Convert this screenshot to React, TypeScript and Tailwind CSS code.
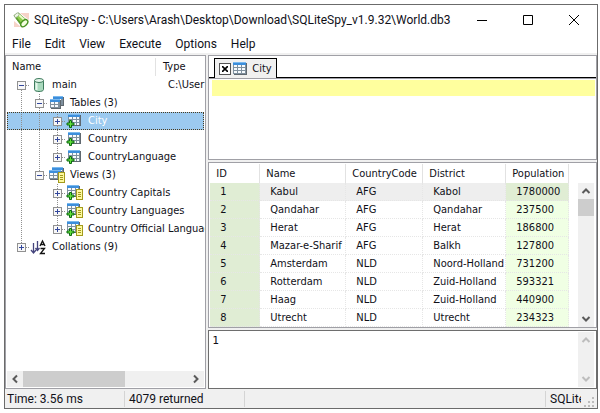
import { useState } from 'react'
import type { ReactNode } from 'react'

type IconName = 'database' | 'tables' | 'views' | 'table' | 'view' | 'collation'

interface TreeNode {
  label: string
  icon: IconName
  type?: string
  open?: boolean
  above?: boolean
  below?: boolean
  guides: boolean[]
}

const nodes: TreeNode[] = [
  { label: 'main', icon: 'database', type: 'C:\\User', open: true, below: true, guides: [] },
  { label: 'Tables (3)', icon: 'tables', open: true, above: true, below: true, guides: [true] },
  { label: 'City', icon: 'table', above: true, below: true, guides: [true, true] },
  { label: 'Country', icon: 'table', above: true, below: true, guides: [true, true] },
  { label: 'CountryLanguage', icon: 'table', above: true, guides: [true, true] },
  { label: 'Views (3)', icon: 'views', open: true, above: true, guides: [true] },
  { label: 'Country Capitals', icon: 'view', above: true, below: true, guides: [true, false] },
  { label: 'Country Languages', icon: 'view', above: true, below: true, guides: [true, false] },
  { label: 'Country Official Languages', icon: 'view', above: true, guides: [true, false] },
  { label: 'Collations (9)', icon: 'collation', above: true, guides: [] },
]

const columns = [
  { title: 'ID', width: 'w-[50px]' },
  { title: 'Name', width: 'w-[86px]' },
  { title: 'CountryCode', width: 'w-[77px]' },
  { title: 'District', width: 'w-[83px]' },
  { title: 'Population', width: 'w-[63px]' },
]

const cities = [
  ['1', 'Kabul', 'AFG', 'Kabol', '1780000'],
  ['2', 'Qandahar', 'AFG', 'Qandahar', '237500'],
  ['3', 'Herat', 'AFG', 'Herat', '186800'],
  ['4', 'Mazar-e-Sharif', 'AFG', 'Balkh', '127800'],
  ['5', 'Amsterdam', 'NLD', 'Noord-Holland', '731200'],
  ['6', 'Rotterdam', 'NLD', 'Zuid-Holland', '593321'],
  ['7', 'Haag', 'NLD', 'Zuid-Holland', '440900'],
  ['8', 'Utrecht', 'NLD', 'Utrecht', '234323'],
]

const menus = ['File', 'Edit', 'View', 'Execute', 'Options', 'Help']

function Logo() {
  return (
    <svg viewBox="0 0 16 16" className="h-4 w-4 shrink-0">
      <path d="M7 1h9v7zM1 9v6h7z" fill="#f6d3c8" />
      <path d="M1 3.500 5.500 1 14 8.500 8.500 14z" fill="#8fcf4d" stroke="#5c8f3a" strokeWidth="0.7" />
      <path d="m5.500 2.500 6 5.500" stroke="#e9fbc8" strokeWidth="2" />
      <path d="m3 5.500 5.500 7" stroke="#5c9d2e" strokeWidth="1.500" />
      <ellipse cx="3.700" cy="3.200" rx="1.700" ry="2.800" transform="rotate(50 3.700 3.200)" fill="#eef6e4" stroke="#8aa57a" strokeWidth="0.7" />
      <ellipse cx="11.300" cy="11.200" rx="2.600" ry="4.200" transform="rotate(45 11.300 11.200)" fill="#f4fde0" stroke="#4a9422" strokeWidth="1.400" />
    </svg>
  )
}

function TableGrid({ x, y, w = 12, h = 11 }: { x: number; y: number; w?: number; h?: number }) {
  return (
    <g>
      <rect x={x + 1} y={y + 1} width={w} height={h} fill="#5f686f" />
      <rect x={x} y={y} width={w} height={h} fill="#7f909e" />
      <rect x={x} y={y} width={w} height="3" fill="#3c8edb" />
      <rect x={x} y={y} width={w} height="1" fill="#79b8ee" />
      {[3, 6, 9].filter((r) => r + 2 <= h).map((r) =>
        [1, 5, 9].map((c) => (
          <rect key={`${r}-${c}`} x={x + c} y={y + r} width={Math.min(3, w - c - 1)} height="2" fill="#f6fafd" />
        ))
      )}
    </g>
  )
}

function Plus() {
  return (
    <path
      d="M3.500 8.500h2v2.500H8v2H5.500v2.500h-2V13H1v-2h2.500z"
      fill="#63e03c"
      stroke="#0c6b12"
      strokeWidth="1"
    />
  )
}

function Sheet({ x, y }: { x: number; y: number }) {
  return (
    <g>
      <rect x={x + 0.5} y={y + 0.5} width="6" height="10" fill="#fdf9a0" stroke="#a39a1c" />
      <path d={`M${x + 2} ${y + 3.5}h3M${x + 2} ${y + 5.5}h3M${x + 2} ${y + 7.5}h3`} stroke="#a39a1c" />
    </g>
  )
}

const drawings: Record<IconName, ReactNode> = {
  database: (
    <>
      <path d="M4.500 4.500v9c0 1.300 2 2 4.500 2s4.500-.7 4.500-2v-9" fill="#a9d9bd" stroke="#3d7a5c" />
      <path d="M6.500 6v8" stroke="#e6f7ec" strokeWidth="2" />
      <ellipse cx="9" cy="4.500" rx="4.500" ry="2" fill="#e4f5ea" stroke="#3d7a5c" />
    </>
  ),
  tables: (
    <>
      <TableGrid x={5} y={2} w={10} h={9} />
      <TableGrid x={2} y={5} w={10} h={9} />
    </>
  ),
  views: (
    <>
      <TableGrid x={4} y={1} w={11} h={9} />
      <TableGrid x={1} y={4} w={12} h={9} />
      <Sheet x={10} y={6} />
    </>
  ),
  table: (
    <>
      <TableGrid x={2} y={2} />
      <Plus />
    </>
  ),
  view: (
    <>
      <TableGrid x={1} y={1} />
      <Plus />
      <Sheet x={10} y={5} />
    </>
  ),
  collation: (
    <>
      <path d="M3.500 5v10M1 12l2.500 3L6 12M7.500 3v9M5.500 10l2 2.500 2-2.500" stroke="#44447c" strokeWidth="1.300" fill="none" />
      <path d="m10 8 2.500-5L15 8M11 6.500h3M10.500 10.500h4l-4 5H15" stroke="#111" strokeWidth="1.300" fill="none" />
    </>
  ),
}

function NodeIcon({ name }: { name: IconName }) {
  return (
    <svg viewBox="0 0 18 18" className="h-[18px] w-[18px] shrink-0">
      {drawings[name]}
    </svg>
  )
}

function Branch({ open, above, below }: { open?: boolean; above?: boolean; below?: boolean }) {
  return (
    <svg viewBox="0 0 18 18" className="h-[18px] w-[18px] shrink-0" fill="none">
      {above && <path d="M9.500 0v5" stroke="#909090" strokeDasharray="1 1" />}
      {below && <path d="M9.500 14v4" stroke="#909090" strokeDasharray="1 1" />}
      <path d="M14 9.500h4" stroke="#909090" strokeDasharray="1 1" />
      <rect x="5.500" y="5.500" width="8" height="8" fill="#f8f8f8" stroke="#919191" />
      <path d="M7 9.500h5" stroke="#33479c" />
      {!open && <path d="M9.500 7v5" stroke="#33479c" />}
    </svg>
  )
}

function Guide({ visible }: { visible: boolean }) {
  return (
    <svg viewBox="0 0 18 18" className="h-[18px] w-[18px] shrink-0">
      {visible && <path d="M9.500 0v18" stroke="#909090" strokeDasharray="1 1" />}
    </svg>
  )
}

function Arrow({ d, muted }: { d: string; muted?: boolean }) {
  return (
    <svg viewBox="0 0 16 16" className="h-4 w-4" fill="none">
      <path d={d} stroke={muted ? '#bdbdbd' : '#5a5a5a'} strokeWidth="2" />
    </svg>
  )
}

const arrows = {
  up: 'm4.500 10 3.500-3.500L11.500 10',
  down: 'm4.500 6 3.500 3.500L11.500 6',
  left: 'M10 4.500 6.500 8l3.500 3.500',
  right: 'm6 4.500 3.500 3.500L6 11.500',
}

function TitleBar() {
  return (
    <header className="flex h-[30px] shrink-0 items-center pl-2 font-['Roboto',sans-serif] text-[12px]">
      <Logo />
      <h1 className="min-w-0 flex-1 pl-[5px] whitespace-nowrap">
        SQLiteSpy - C:\Users\Arash\Desktop\Download\SQLiteSpy_v1.9.32\World.db3
      </h1>
      <div className="flex">
        <button aria-label="Minimize" className="flex h-7 w-[46px] items-center justify-center">
          <svg viewBox="0 0 10 10" className="h-[10px] w-[10px]"><path d="M0 5.500h10" stroke="#000" /></svg>
        </button>
        <button aria-label="Maximize" className="flex h-7 w-[46px] items-center justify-center">
          <svg viewBox="0 0 10 10" className="h-[10px] w-[10px]"><path d="M.5.5h9v9h-9z" stroke="#000" fill="none" /></svg>
        </button>
        <button aria-label="Close" className="flex h-7 w-[46px] items-center justify-center">
          <svg viewBox="0 0 10 10" className="h-[10px] w-[10px]"><path d="m0 0 10 10M10 0 0 10" stroke="#000" /></svg>
        </button>
      </div>
    </header>
  )
}

function ObjectTree() {
  const [selected, setSelected] = useState('City')

  return (
    <aside className="flex w-[34%] shrink-0 flex-col overflow-hidden border border-[#a0a0a6] bg-white p-px leading-[18px]">
      <div className="flex h-[19px] items-center">
        <span className="w-[149px] border-r border-[#e2e2e2] pl-[5px]">Name</span>
        <span className="pl-[7px]">Type</span>
      </div>
      <ul>
        {nodes.map((node) => (
          <li key={node.label}>
            <button
              onClick={() => setSelected(node.label)}
              className={
                node.label === selected
                  ? 'flex h-[18px] w-full items-center bg-[#9ccaf0] pl-[5px] text-white outline-1 -outline-offset-1 outline-dotted outline-[#4a3c20]'
                  : 'flex h-[18px] w-full items-center pl-[5px]'
              }
            >
              {node.guides.map((visible, i) => <Guide key={i} visible={visible} />)}
              <Branch open={node.open} above={node.above} below={node.below} />
              <NodeIcon name={node.icon} />
              <span className="grow pl-1 text-left whitespace-nowrap">{node.label}</span>
              {node.type && <span className="shrink-0 whitespace-nowrap">{node.type}</span>}
            </button>
          </li>
        ))}
      </ul>
      <div className="mt-auto flex h-4 bg-[#f0f0f0]">
        <button aria-label="Scroll left"><Arrow d={arrows.left} /></button>
        <div className="flex-1"><div className="h-full w-[62%] bg-[#cdcdcd]" /></div>
        <button aria-label="Scroll right"><Arrow d={arrows.right} /></button>
      </div>
    </aside>
  )
}

function Editor() {
  return (
    <section className="flex min-h-[60px] flex-1 flex-col border border-[#a0a0a6] bg-white pt-px">
      <div className="flex shrink-0 pt-px">
        <div className="w-[5px] border-b border-black" />
        <div className="flex h-[20px] w-[63px] items-center border border-b-0 border-black bg-[#f0f0f0] pl-1">
          <button aria-label="Close tab" className="flex h-[12px] w-[12px] shrink-0 items-center justify-center border border-[#555] bg-white">
            <svg viewBox="0 0 6 6" className="h-[6px] w-[6px]"><path d="m0 0 6 6M6 0 0 6" stroke="#000" strokeWidth="1.600" /></svg>
          </button>
          <svg viewBox="0 0 14 14" className="ml-[2px] h-[14px] w-[14px] shrink-0"><TableGrid x={0} y={0} w={13} h={12} /></svg>
          <span className="pl-[5px]">City</span>
        </div>
        <div className="flex-1 border-b border-black" />
      </div>
      <div className="flex min-h-0 flex-1 border-t border-[#a0a0a6] pt-px pr-px pl-[3px]">
        <textarea
          aria-label="SQL"
          className="flex-1 resize-none bg-[linear-gradient(#ffff9e_16px,transparent_16px)] leading-[16px] outline-none"
        />
      </div>
    </section>
  )
}

function CityGrid() {
  return (
    <section className="flex shrink-0 border border-[#a0a0a6] bg-white pt-px pl-px">
      <table className="w-[359px] table-fixed border-separate border-spacing-0">
        <thead>
          <tr className="h-[19px]">
            {columns.map((column) => (
              <th key={column.title} className={`${column.width} border-r border-[#e2e2e2] p-0 pl-[6px] text-left font-normal`}>
                {column.title}
              </th>
            ))}
          </tr>
        </thead>
        <tbody>
          {cities.map((row, r) => (
            <tr key={row[0]} className={r === 0 ? 'h-[18px] bg-[#eeeeee]' : 'h-[18px]'}>
              {row.map((value, c) => (
                <td
                  key={c}
                  className={`border-r border-b border-dotted border-[#e6e6e6] p-0 pl-[10px] whitespace-nowrap ${
                    c === 0 || (c === 4 && r === 0) ? 'bg-[#e0edd4]' : c === 4 ? 'bg-[#f0ffe4]' : ''
                  }`}
                >
                  {value}
                </td>
              ))}
            </tr>
          ))}
        </tbody>
      </table>
      <div className="mt-[19px] mr-[2px] ml-auto flex w-4 flex-col bg-[#f0f0f0]">
        <button aria-label="Scroll up"><Arrow d={arrows.up} /></button>
        <div className="h-[17px] bg-[#cdcdcd]" />
        <button aria-label="Scroll down" className="mt-auto"><Arrow d={arrows.down} /></button>
      </div>
    </section>
  )
}

function Output() {
  return (
    <section className="flex h-[59px] shrink-0 border border-[#6e6e6e] bg-white py-px pr-[2px]">
      <textarea
        readOnly
        aria-label="Result"
        defaultValue="1"
        className="flex-1 resize-none py-px pl-[3px] font-['DejaVu_Sans_Mono',monospace] text-[11px] outline-none"
      />
      <div className="flex w-4 flex-col justify-between bg-[#f0f0f0]">
        <button aria-label="Scroll result up"><Arrow d={arrows.up} muted /></button>
        <button aria-label="Scroll result down"><Arrow d={arrows.down} muted /></button>
      </div>
    </section>
  )
}

function StatusBar() {
  return (
    <footer className="flex h-[19px] shrink-0 items-center font-['Roboto',sans-serif] text-[12px]">
      <span className="w-[120px] border-r border-[#d4d4d4] pl-[2px]">Time: 3.56 ms</span>
      <span className="w-[120px] border-r border-[#d4d4d4] pl-1">4079 returned</span>
      <span className="ml-auto w-[36px] overflow-hidden border-l border-[#d4d4d4] pl-1 whitespace-nowrap">SQLite</span>
      <svg viewBox="0 0 16 16" className="h-4 w-4 self-end" fill="#bcbcbc">
        <path d="M11 5h2v2h-2zM11 9h2v2h-2zM11 13h2v2h-2zM7 9h2v2H7zM7 13h2v2H7zM3 13h2v2H3z" />
      </svg>
    </footer>
  )
}

export default function App() {
  return (
    <div className="h-screen bg-white pt-1 pr-[2px] pb-1 pl-1 font-['DejaVu_Sans_Condensed','Open_Sans',sans-serif] text-[11px] leading-4 text-[#101018]">
      <div className="flex h-full flex-col border border-[#6b6b6b] bg-[#f0f0f0]">
        <div className="shrink-0 bg-white">
          <TitleBar />
          <nav className="flex h-[18px] items-center gap-[14px] pl-[7px] font-['Roboto',sans-serif] text-[12px]">
            {menus.map((menu) => <button key={menu}>{menu}</button>)}
          </nav>
        </div>
        <main className="mt-[2px] flex min-h-0 flex-1 gap-[2px]">
          <ObjectTree />
          <div className="flex min-w-0 flex-1 flex-col gap-[2px]">
            <Editor />
            <CityGrid />
            <Output />
          </div>
        </main>
        <StatusBar />
      </div>
    </div>
  )
}
